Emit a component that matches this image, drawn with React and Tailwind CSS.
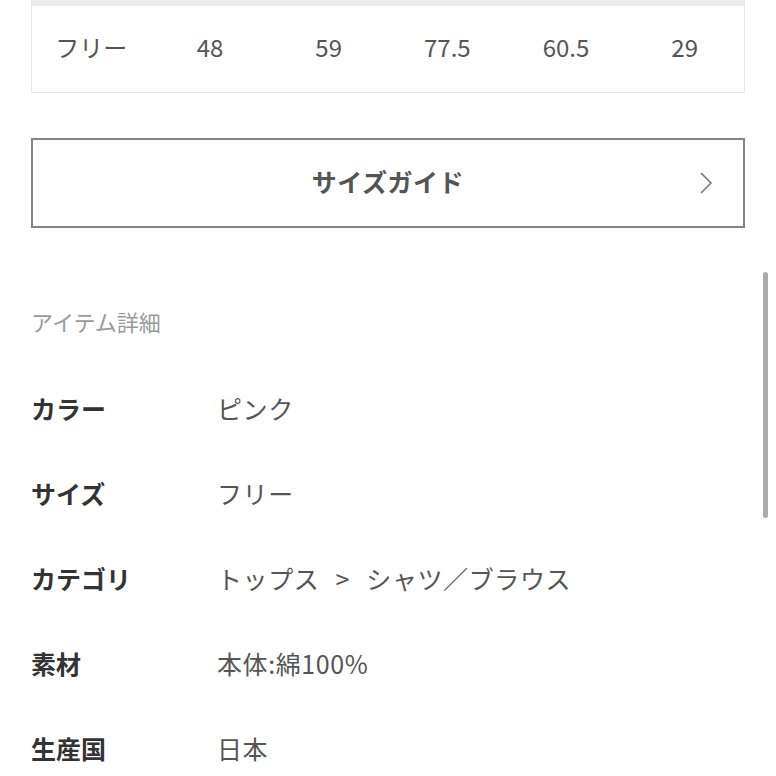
import React from "react";

const sizes = ["フリー", "48", "59", "77.5", "60.5", "29"];

const details = [
  ["カラー", "ピンク"],
  ["サイズ", "フリー"],
  ["カテゴリ", "トップス > シャツ／ブラウス"],
  ["素材", "本体:綿100%"],
  ["生産国", "日本"],
];

export default function App() {
  return (
    <div
      className="relative w-[776px] h-[776px] overflow-hidden bg-white"
      style={{ fontFamily: '"Noto Sans CJK JP", "Noto Sans", sans-serif' }}
    >
      <div className="px-[31px]">
        {/* size table (scrolled, header row mostly out of view) */}
        <div className="border-x border-b border-[#e6e6e6]">
          <div className="h-[6px] bg-[#ececec]" />
          <div className="grid grid-cols-6 h-[86px] items-center pb-[4px] text-[24px] text-[#555]">
            {sizes.map((s) => (
              <span key={s} className="text-center">
                {s}
              </span>
            ))}
          </div>
        </div>

        <button className="mt-[45px] w-full h-[90px] border-2 border-[#858585] flex items-center justify-center relative pb-[3px]">
          <span className="text-[25px] font-bold text-[#555] tracking-[0.5px]">
            サイズガイド
          </span>
          <svg
            className="absolute right-[30px] top-1/2 -translate-y-1/2 w-[14px] h-[24px]"
            viewBox="0 0 14 24"
            fill="none"
            stroke="#777"
            strokeWidth="1.6"
          >
            <path d="M2 2l10 10L2 22" />
          </svg>
        </button>

        <h3 className="mt-[78px] text-[22px] text-[#9a9a9a] leading-[30px]">
          アイテム詳細
        </h3>

        <div className="mt-[30px]">
          {details.map(([k, v]) => (
            <div key={k} className="flex items-center h-[85px]">
              <span className="w-[186px] text-[25px] font-bold text-[#333]">
                {k}
              </span>
              <span className="text-[25px] text-[#555] tracking-[0.6px] [word-spacing:10px]">
                {v}
              </span>
            </div>
          ))}
        </div>
      </div>

      {/* scroll indicator */}
      <div className="absolute left-[763px] top-[272px] w-[5px] h-[246px] rounded-full bg-[#ababab]" />
    </div>
  );
}
